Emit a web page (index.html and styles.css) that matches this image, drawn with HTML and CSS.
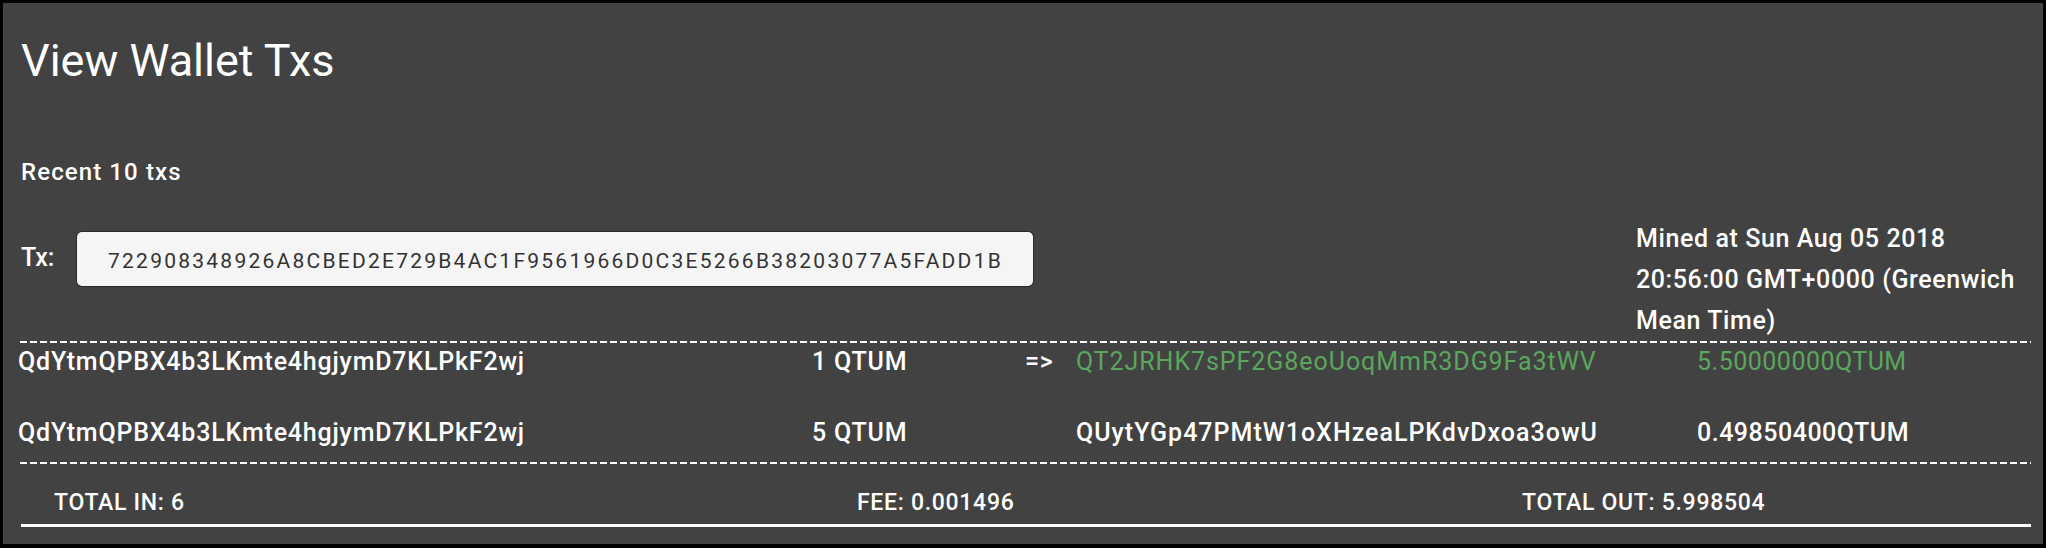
FILE: index.html
```html
<!DOCTYPE html>
<html lang="en">
<head>
<meta charset="utf-8">
<title>View Wallet Txs</title>
<link rel="stylesheet" href="styles.css">
</head>
<body>
<main class="panel">
  <header class="head">
    <h1 class="title">View Wallet Txs</h1>
    <div class="recent">Recent 10 txs</div>
    <div class="tx-row">
      <span class="tx-label">Tx:</span>
      <div class="tx-input">722908348926A8CBED2E729B4AC1F9561966D0C3E5266B38203077A5FADD1B</div>
      <div class="mined">Mined at Sun Aug 05 2018 20:56:00 GMT+0000 (Greenwich Mean Time)</div>
    </div>
  </header>
  <div class="dash"></div>
  <section class="io-list">
    <div class="io-row">
      <span class="in-addr">QdYtmQPBX4b3LKmte4hgjymD7KLPkF2wj</span>
      <span class="in-amt">1 QTUM</span>
      <span class="arrow">=&gt;</span>
      <span class="out-addr mine">QT2JRHK7sPF2G8eoUoqMmR3DG9Fa3tWV</span>
      <span class="out-amt mine">5.50000000QTUM</span>
    </div>
    <div class="io-row">
      <span class="in-addr">QdYtmQPBX4b3LKmte4hgjymD7KLPkF2wj</span>
      <span class="in-amt">5 QTUM</span>
      <span class="arrow"></span>
      <span class="out-addr">QUytYGp47PMtW1oXHzeaLPKdvDxoa3owU</span>
      <span class="out-amt">0.49850400QTUM</span>
    </div>
  </section>
  <div class="dash"></div>
  <footer class="totals">
    <span>TOTAL IN: 6</span>
    <span>FEE: 0.001496</span>
    <span>TOTAL OUT: 5.998504</span>
  </footer>
  <div class="rule"></div>
</main>
</body>
</html>
```
FILE: styles.css
```css
html, body {
  margin: 0;
  padding: 0;
  background: #000;
}

body {
  width: 2046px;
  height: 548px;
  overflow: hidden;
}

.panel {
  box-sizing: border-box;
  height: 548px;
  border-style: solid;
  border-color: #000;
  border-width: 3px 3px 4px 3px;
  background: #424242;
  padding: 0 12px 0 15px;
  color: #fff;
  font-family: Roboto, "Liberation Sans", sans-serif;
}

.head {
  padding-left: 3px;
}

.title {
  margin: 32px 0 0;
  font-size: 45px;
  line-height: 52px;
  font-weight: 400;
}

.recent {
  margin-top: 70px;
  font-size: 24px;
  line-height: 30px;
  font-weight: 500;
  letter-spacing: 1.1px;
}

.tx-row {
  display: flex;
  align-items: flex-start;
  margin-top: 31px;
}

.tx-label {
  flex: 0 0 56px;
  margin-top: 25px;
  font-size: 25px;
  line-height: 30px;
  font-weight: 500;
}

.tx-input {
  box-sizing: border-box;
  flex: 0 0 956px;
  height: 54px;
  margin-top: 14px;
  padding: 4px 0 0 31px;
  background: #f5f5f5;
  border-radius: 5px;
  box-shadow: 0 0 0 1px #2a2a2a;
  color: #333;
  font-size: 21px;
  line-height: 50px;
  letter-spacing: 2.24px;
  white-space: nowrap;
}

.mined {
  flex: 0 0 395px;
  margin-left: auto;
  font-size: 25px;
  line-height: 41px;
  font-weight: 500;
  letter-spacing: 0.6px;
}

.dash {
  height: 2px;
  margin-left: 2px;
  background-image: repeating-linear-gradient(90deg, #fff 0 7px, transparent 7px 10px);
}

.io-list {
  display: flex;
  flex-direction: column;
  gap: 41px;
  padding: 4px 0 14px;
}

.io-row {
  display: grid;
  grid-template-columns: 794px 213px 51px 621px 1fr;
  font-size: 25px;
  line-height: 30px;
  font-weight: 500;
  letter-spacing: 0.8px;
  white-space: nowrap;
}

.out-amt {
  letter-spacing: 0.5px;
}

.out-addr {
  letter-spacing: 1px;
}

.mine {
  color: #5aa65d;
  font-weight: 400;
}

.out-addr.mine {
  letter-spacing: 0.95px;
}

.totals {
  display: grid;
  grid-template-columns: 803px 665px 1fr;
  margin-top: 25px;
  padding-left: 36px;
  font-size: 23px;
  line-height: 28px;
  font-weight: 500;
  letter-spacing: 0.7px;
  white-space: nowrap;
}

.rule {
  height: 3px;
  margin: 7px 0 0 3px;
  background: #fff;
}
```
